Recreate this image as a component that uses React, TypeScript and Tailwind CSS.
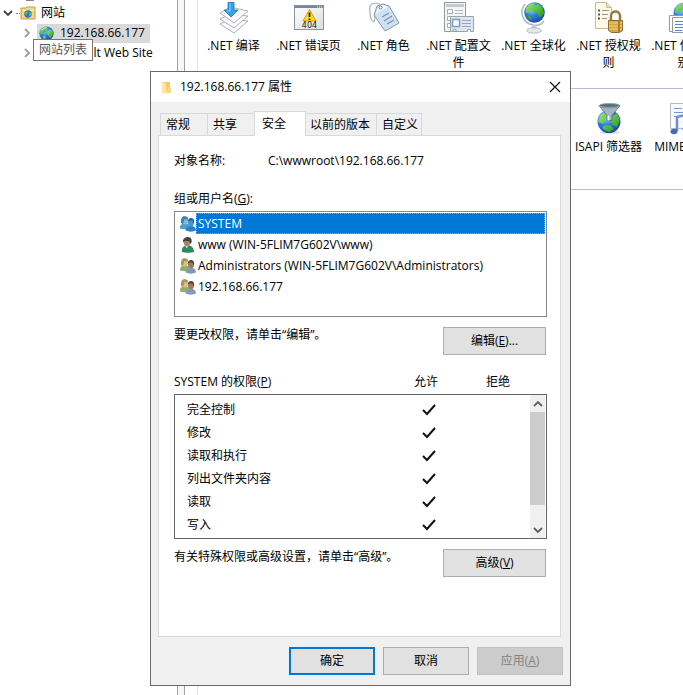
import type { ReactNode } from "react";
import clsx from "clsx";

const users = [
  { name: "SYSTEM", icon: "system" },
  { name: "www (WIN-5FLIM7G602V\\www)", icon: "single" },
  { name: "Administrators (WIN-5FLIM7G602V\\Administrators)", icon: "group" },
  { name: "192.168.66.177", icon: "group" },
];

const permissions = ["完全控制", "修改", "读取和执行", "列出文件夹内容", "读取", "写入"];

const tabs = [
  { label: "常规", size: "w-12 pl-[5px]" },
  { label: "共享", size: "w-12 pl-[5px]" },
  { label: "安全", size: "w-[52px] pl-[7px]", active: true },
  { label: "以前的版本", size: "w-[72px] pl-1" },
  { label: "自定义", size: "w-[46px] pl-[5px]" },
];

function Globe({ className }: { className?: string }) {
  return (
    <svg viewBox="0 0 16 16" className={className} aria-hidden="true">
      <defs>
        <radialGradient id="sea" cx="0.35" cy="0.3" r="0.8">
          <stop offset="0" stopColor="#a4dcff" />
          <stop offset="0.45" stopColor="#2f7fe6" />
          <stop offset="1" stopColor="#173c9c" />
        </radialGradient>
        <linearGradient id="land" x1="0" y1="0" x2="1" y2="1">
          <stop offset="0" stopColor="#a6e08c" />
          <stop offset="0.5" stopColor="#5cc43c" />
          <stop offset="1" stopColor="#2a8a24" />
        </linearGradient>
      </defs>
      <circle cx="8" cy="8" r="7.600" fill="url(#sea)" />
      <path d="M2 4.600 5 1.600 8.600 1l1 1.600-2.400 1.600.6 1.600-2.600 1.400-.8 2.200-2.600-1.200L1 8z" fill="url(#land)" />
      <path d="m9.400 5.200 2.800-1.800 2.200 1.400.8 3-1.400 3-2.200 2.400-1.400-2.800L8.400 8z" fill="url(#land)" />
      <path d="m4.600 10.400 2.600.6.8 1.800-1.600 1.800-2-1.400z" fill="url(#land)" />
      <path d="M3 4.400a6 6 0 0 1 5-2.600" stroke="#e4f6ff" strokeWidth="0.900" fill="none" />
    </svg>
  );
}

function CompileIcon() {
  return (
    <svg viewBox="0 0 32 32" className="h-8 w-8" aria-hidden="true">
      <g fill="#fafafa" stroke="#a4a9ab" strokeWidth="0.900" strokeLinejoin="round">
        <path d="m2 22 10-5 18 2-14 12z" />
        <path d="m2 17 10-5 18 2-14 12z" />
        <path d="m2 11 10-6 18 4-14 12z" />
      </g>
      <path d="M10 .5h6V8h4l-7 7-7-7h4z" fill="#35a2e8" stroke="#1473b8" strokeWidth="0.800" />
      <path d="M12 1.500V9h-3" stroke="#8ed2fa" fill="none" />
    </svg>
  );
}

function ErrorPageIcon() {
  return (
    <svg viewBox="0 0 32 32" className="h-8 w-8" aria-hidden="true">
      <defs>
        <linearGradient id="page" x1="0" y1="0" x2="1" y2="1">
          <stop offset="0" stopColor="#ffffff" />
          <stop offset="1" stopColor="#dcdcdc" />
        </linearGradient>
      </defs>
      <rect x="1.500" y="3.500" width="29" height="24" fill="url(#page)" stroke="#8c949b" />
      <path d="M2 4h28v2H2z" fill="#6f86a5" />
      <path d="M24 5h1m1 0h1m1 0h1" stroke="#fff" />
      <path d="M16.500 7.500 23 19H10z" fill="#ffd92e" stroke="#d9a300" strokeLinejoin="round" />
      <path d="M16.500 10.500V15m0 1.500V18" stroke="#222" strokeWidth="1.800" />
      <text x="16.500" y="26" textAnchor="middle" fontSize="8" fill="#222" fontFamily="DejaVu Sans">
        404
      </text>
    </svg>
  );
}

function RolesIcon() {
  return (
    <svg viewBox="0 0 32 32" className="h-8 w-8" aria-hidden="true">
      <path d="M12 2C5 0 0 2 2 10c0 5 1 9 4 10 2-5 0-10 4-16" fill="none" stroke="#a9b0b5" strokeWidth="1.200" />
      <path d="m9 4 6-2 6 2 10 17-14 8L6 13z" fill="#cfe1ed" stroke="#7b9caf" strokeLinejoin="round" />
      <path d="m10 5 5-2 5 2L8 12z" fill="#edf5f9" />
      <circle cx="12.500" cy="5.500" r="1.500" fill="#fff" stroke="#747f86" />
      <path d="m14 15 7-4m-5 8 8-5m-5 8 7-4" stroke="#6d92c2" strokeWidth="1.200" />
    </svg>
  );
}

function ProfileIcon() {
  return (
    <svg viewBox="0 0 32 32" className="h-8 w-8" aria-hidden="true">
      <path d="M1.500.500h21v29h-21z" fill="#f4f5f6" stroke="#90979d" />
      <path d="M3 2h18v3H3z" fill="#c4cbd0" />
      <path d="M4.500 7.500h5v4h-5zm0 7h3v4h-3zm0 7h3v4h-3z" fill="#fff" stroke="#a3adb4" />
      <path d="M4 12.500h1M12 8.500h8m-8 3h8" stroke="#b1bac2" />
      <path d="M7.500 14.500h23v15h-3v-2h-3v2H13v-2h-3v2H7.500z" fill="#dfe5ea" stroke="#98a4ae" />
      <rect x="9.500" y="17.500" width="7" height="7" fill="#fff" stroke="#7d9fc9" strokeWidth="1.600" />
      <path d="M19 18.500h9m-9 3h9m-9 3h9" stroke="#8ea9cb" strokeWidth="1.200" />
    </svg>
  );
}

function GlobalizationIcon() {
  return (
    <svg viewBox="0 0 32 32" className="h-8 w-8" aria-hidden="true">
      <path d="M7 2c-6 7-3 19 8 21 5 1 9-1 11-4" fill="none" stroke="#b7bcc0" strokeWidth="1.600" />
      <path d="m14 23-1 4h6l-1-4" fill="#c9cdd0" />
      <ellipse cx="16" cy="28.500" rx="7.500" ry="2.700" fill="#e4e6e8" stroke="#a8adb1" strokeWidth="0.700" />
      <circle cx="16.500" cy="10.500" r="10.300" fill="url(#sea)" />
      <path d="m8 6 4-4 5-1-1 4-3 2-1 3-4 1zm7-1 5-3 4 3 2 6-4 5-3-5-4-1-3-3z" fill="url(#land)" />
      <path d="m9 13 4 1 1 4-3-1z" fill="#44a23f" />
    </svg>
  );
}

function AuthorizationIcon() {
  return (
    <svg viewBox="0 0 32 32" className="h-8 w-8" aria-hidden="true">
      <path d="M2.500.500h11l5 5v21h-16z" fill="#fff9e5" stroke="#c9bd98" />
      <path d="M13.500.500v5h5" fill="#e9dfbd" stroke="#c9bd98" />
      <path d="M5 8.500h2m-2 4h2m-2 4h2" stroke="#555" strokeWidth="2" />
      <path d="M9 8.500h7m-7 4h6m-6 4h5" stroke="#9a9687" />
      <path d="M18 19v-5c0-6 9-6 9 0v5" fill="none" stroke="#937b4c" strokeWidth="2.500" />
      <path d="M15.500 18.500h14v10l-3 2h-8l-3-2z" fill="#d3a743" stroke="#91702b" />
      <path d="M16 21h13m-13 3h13m-13 3h13" stroke="#efd283" />
      <path d="M26 19v11" stroke="#a77d2e" strokeWidth="2" />
    </svg>
  );
}

function TrustIcon() {
  return (
    <svg viewBox="0 0 32 32" className="h-8 w-8" aria-hidden="true">
      <circle cx="16" cy="11" r="10.500" fill="url(#sea)" />
      <path d="m8 5 5-4 5 1-3 5-3 3-5 1zm8 1 5-3 4 7-4 4z" fill="url(#land)" />
      <path d="M1.500 13.500h14v16h-14z" fill="#fff" stroke="#909aa2" />
      <path d="M4.500 15.500h14v15h-14z" fill="#fff" stroke="#909aa2" />
      <path d="M7 19.500h9m-9 3h9m-9 3h9m-9 3h7" stroke="#5b88c1" />
    </svg>
  );
}

function IsapiIcon() {
  return (
    <svg viewBox="0 0 32 32" className="h-8 w-8" aria-hidden="true">
      <ellipse cx="17" cy="29.500" rx="10" ry="1.500" fill="#d9d9d9" />
      <circle cx="16" cy="18.500" r="11.500" fill="url(#sea)" />
      <path d="m7 12 6-3 2 5-3 3-2 4-5-2zm12 2 5-4 3 7-3 7-4-2-3-4zm-9 9 7-1 4 4-5 3-6-3z" fill="url(#land)" />
      <path d="M6 2.500c4 3 17 3 21 0l-8 10v5h-5v-5z" fill="#a5b4c0" stroke="#526778" strokeWidth="0.800" />
      <ellipse cx="16.500" cy="2.500" rx="10" ry="2" fill="#5a6f80" stroke="#91a1ae" />
      <path d="M15.500 12.500v5" stroke="#e9f1f6" strokeWidth="2" />
    </svg>
  );
}

function MimeIcon() {
  return (
    <svg viewBox="0 0 32 32" className="h-8 w-8" aria-hidden="true">
      <path d="M2.500.500h14l5 5v20h-19z" fill="#fafafa" stroke="#b7bbbe" />
      <path d="M6 5.500h8m-8 4h11m-11 4h4" stroke="#6e97ce" />
      <path d="M9 28V14l12-3v14" stroke="#6a8fd2" strokeWidth="2.500" fill="none" />
      <ellipse cx="6" cy="28.500" rx="3.500" ry="2.700" fill="#416cbb" />
      <ellipse cx="18" cy="26" rx="3.500" ry="2.700" fill="#416cbb" />
    </svg>
  );
}

function UserIcon({ kind }: { kind: string }) {
  if (kind === "single") {
    return (
      <svg viewBox="0 0 16 16" className="h-4 w-4" aria-hidden="true">
        <path d="M2 15c-.5-4 1-6 4-6.500h3c3 .5 5 3 5 6.500-3 1-9 1-12 0z" fill="#2f8a57" />
        <path d="m5 8.500 2 3 1-3z" fill="#eef3ed" />
        <ellipse cx="7" cy="5" rx="3.200" ry="4.200" fill="#a98068" />
        <path d="M3 5.500C2 0 10-2 11.500 2.500c.5 3-.5 4-1 4.500L9 4 4.500 4z" fill="#46413e" />
      </svg>
    );
  }
  const system = kind === "system";
  return (
    <svg viewBox="0 0 16 16" className="h-4 w-4" aria-hidden="true">
      <path d="M0 12.500C0 9 1 7.500 5 7.500s5 2 5 5c-3 1-7 1-10 0z" fill={system ? "#4f9fcd" : "#8fae6c"} />
      <ellipse cx="5" cy="4.500" rx="3" ry="4" fill={system ? "#7bb9da" : "#dcc08d"} />
      <path d="M1 7C.5 1 3-.5 6 .5c2 .5 2.500 2 2 3L4.500 3 3 8z" fill={system ? "#3a84b4" : "#a89858"} />
      <path d="M5.500 14.500c0-3 2-4.500 5.500-4.500s5 2 5 4.500c-3 1.500-7 1.500-10.500 0z" fill={system ? "#2f82c2" : "#8199bd"} />
      <ellipse cx="11" cy="6.500" rx="3" ry="3.800" fill={system ? "#4694c8" : "#a77754"} />
      <path d="M7.800 6C7.500 1 14 .5 14.200 5.500l-.7 2-1-3-3.500 0z" fill={system ? "#225f90" : "#4b443e"} />
    </svg>
  );
}

function Chevron({ className }: { className?: string }) {
  return (
    <svg viewBox="0 0 10 10" className={clsx("h-[10px] w-[10px] shrink-0", className)} aria-hidden="true">
      <path d="m1 3 4 4 4-4" fill="none" stroke="currentColor" strokeWidth="1.800" />
    </svg>
  );
}

function Feature({ icon, children, className }: { icon: ReactNode; children: ReactNode; className?: string }) {
  return (
    <a href="#" className={clsx("flex flex-col items-center text-center", className)}>
      {icon}
      <span className="mt-[3px] leading-[17px] whitespace-nowrap">{children}</span>
    </a>
  );
}

function PushButton({ children }: { children: ReactNode }) {
  return (
    <button type="button" className="h-7 w-[103px] shrink-0 border border-[#adadad] bg-[#e1e1e1] leading-4">
      {children}
    </button>
  );
}

function SiteTree() {
  return (
    <nav className="w-[177px] shrink-0 overflow-hidden" aria-label="连接">
      <div className="ml-[22px] h-[3px]">
        <div className="ml-1 h-px w-2 bg-[#8b8178]" />
      </div>
      <ul>
        <li>
          <div className="flex h-5 items-center pl-[3px]">
            <Chevron className="text-[#404040]" />
            <span className="ml-[3px] w-1 border-t border-dotted border-[#808080]" />
            <svg viewBox="0 0 16 14" className="h-[14px] w-4" aria-hidden="true">
              <path d="M1 2h5l1-1h8v12H1z" fill="#f5d681" stroke="#c89c46" />
              <path d="M2 4.500h12" stroke="#fff1bb" />
              <circle cx="8" cy="8" r="3.700" fill="#2374bd" />
              <path d="m5 7 2-2 1 1-1 2-1 2zm4-1 2 1v2l-2 2z" fill="#65bb6c" />
            </svg>
            <span className="ml-[5px]">网站</span>
          </div>
          <ul>
            <li className="flex h-5 items-center pl-[22px]">
              <Chevron className="-rotate-90 text-[#a0a0a0]" />
              <span className="ml-[5px] flex h-[19px] items-center bg-[#d9d9d9] pr-[5px] pl-[2px]">
                <Globe className="mr-[6px] h-[15px] w-[15px]" />
                192.168.66.177
              </span>
            </li>
            <li className="flex h-5 items-center pl-[22px]">
              <Chevron className="-rotate-90 text-[#a0a0a0]" />
              <Globe className="mr-[6px] ml-[7px] h-[15px] w-[15px]" />
              Default Web Site
            </li>
          </ul>
        </li>
      </ul>
      <div
        role="tooltip"
        className="absolute top-[39px] left-[33px] flex h-[22px] items-center border border-[#767676] bg-white px-[5px] text-[#575757]"
      >
        网站列表
      </div>
    </nav>
  );
}

function FeatureView() {
  return (
    <main className="ml-3 min-w-0 flex-1 overflow-hidden border-l border-[#e3e3e3]">
      <section className="-ml-[2px] grid h-[88px] grid-cols-[repeat(7,75px)] pt-[2px]">
        <Feature icon={<CompileIcon />}>.NET 编译</Feature>
        <Feature icon={<ErrorPageIcon />}>.NET 错误页</Feature>
        <Feature icon={<RolesIcon />}>.NET 角色</Feature>
        <Feature icon={<ProfileIcon />}>
          .NET 配置文
          <br />件
        </Feature>
        <Feature icon={<GlobalizationIcon />}>.NET 全球化</Feature>
        <Feature icon={<AuthorizationIcon />}>
          .NET 授权规
          <br />则
        </Feature>
        <Feature icon={<TrustIcon />}>
          .NET 信任级
          <br />别
        </Feature>
      </section>
      <section className="-ml-[2px] grid h-[102px] grid-cols-[repeat(7,75px)] border-y border-[#b3bee0] pt-[14px]">
        <Feature icon={<IsapiIcon />} className="col-start-6">
          ISAPI 筛选器
        </Feature>
        <Feature icon={<MimeIcon />}>MIME 类型</Feature>
      </section>
    </main>
  );
}

function PermissionTable() {
  return (
    <div className="relative mt-[19px]">
      <table className="block">
        <thead className="block">
          <tr className="grid grid-cols-[1fr_72px_72px] pr-[13px] leading-4">
            <th className="text-left font-normal">
              SYSTEM 的权限(<u>P</u>)
            </th>
            <th className="font-normal">允许</th>
            <th className="font-normal">拒绝</th>
          </tr>
        </thead>
        <tbody className="mt-1 block border border-[#646464] pt-[3px] pb-[2px]">
          {permissions.map((name) => (
            <tr key={name} className="grid h-[23px] grid-cols-[1fr_72px_72px] items-center pr-[9px]">
              <th scope="row" className="pl-3 text-left font-normal">
                {name}
              </th>
              <td className="flex justify-center">
                <svg viewBox="0 0 14 12" className="h-3 w-[14px]" role="img" aria-label="允许">
                  <path d="m1 6 4 4 8-9" fill="none" stroke="#111" strokeWidth="2" />
                </svg>
              </td>
              <td />
            </tr>
          ))}
        </tbody>
      </table>
      <div className="absolute right-[2px] bottom-px flex h-[143px] w-[15px] flex-col items-center bg-[#f0f0f0] text-[#606060]">
        <Chevron className="mt-1 mb-[3px] rotate-180" />
        <div className="h-[93px] w-full bg-[#cdcdcd]" />
        <Chevron className="mt-auto mb-[3px]" />
      </div>
    </div>
  );
}

function PropertiesDialog() {
  return (
    <div
      role="dialog"
      aria-labelledby="dialog-title"
      className="absolute top-[71px] left-[150px] w-[421px] border border-[#696969] bg-[#f0f0f0]"
    >
      <header className="flex h-[30px] items-center bg-white pr-[9px] pl-[10px]">
        <svg viewBox="0 0 11 13" className="h-[13px] w-[11px]" aria-hidden="true">
          <path d="M1 1h8v11H1z" fill="#f3cc69" />
          <path d="m1 1 4 1v11l-4-1z" fill="#ffe6a0" />
          <path d="M7 7h3v5H5V9h2z" fill="#f9d985" />
        </svg>
        <h1 id="dialog-title" className="ml-2">
          192.168.66.177 属性
        </h1>
        <button type="button" aria-label="关闭" className="ml-auto">
          <svg viewBox="0 0 12 12" className="h-3 w-3" aria-hidden="true">
            <path d="m1 1 10 10M11 1 1 11" stroke="#111" strokeWidth="1.200" />
          </svg>
        </button>
      </header>

      <div role="tablist" className="mt-[9px] flex items-end pl-[9px]">
        {tabs.map((tab) => (
          <button
            key={tab.label}
            type="button"
            role="tab"
            aria-selected={!!tab.active}
            className={clsx(
              "-mr-px border border-b-0 border-[#d9d9d9] text-left whitespace-nowrap",
              tab.size,
              tab.active ? "relative z-10 -mb-px h-[25px] bg-white" : "h-[22px]"
            )}
          >
            {tab.label}
          </button>
        ))}
      </div>

      <div role="tabpanel" className="mr-[9px] ml-[7px] border border-[#d9d9d9] bg-white pt-[17px] pr-[13px] pb-[59px] pl-[15px]">
        <dl className="flex leading-4">
          <dt className="w-[94px]">对象名称:</dt>
          <dd>C:\wwwroot\192.168.66.177</dd>
        </dl>

        <p id="users-label" className="mt-[22px] leading-4">
          组或用户名(<u>G</u>):
        </p>
        <ul role="listbox" aria-labelledby="users-label" className="mt-1 h-[106px] border border-[#828790] p-px">
          {users.map((user, i) => (
            <li key={user.name} role="option" aria-selected={i === 0} className="flex h-[21px] items-center pl-1">
              <UserIcon kind={user.icon} />
              <span
                className={clsx(
                  "flex h-full flex-1 items-center border border-dotted pl-px",
                  i === 0 ? "border-[#ff8728] bg-[#0078d7] text-white" : "border-transparent"
                )}
              >
                {user.name}
              </span>
            </li>
          ))}
        </ul>

        <div className="mt-[10px] flex items-start justify-between pr-px leading-4">
          <p>要更改权限，请单击“编辑”。</p>
          <PushButton>
            编辑(<u>E</u>)...
          </PushButton>
        </div>

        <PermissionTable />

        <div className="mt-[10px] flex items-start justify-between pr-px leading-4">
          <p>有关特殊权限或高级设置，请单击“高级”。</p>
          <PushButton>
            高级(<u>V</u>)
          </PushButton>
        </div>
      </div>

      <footer className="flex justify-end gap-2 py-[10px] pr-[7px]">
        <button type="button" className="h-7 w-[86px] border-2 border-[#0078d7] bg-[#e1e1e1]">
          确定
        </button>
        <button type="button" className="h-7 w-[86px] border border-[#adadad] bg-[#e1e1e1]">
          取消
        </button>
        <button type="button" disabled className="h-7 w-[86px] border border-[#bfbfbf] bg-[#cccccc] text-[#838383]">
          应用(<u>A</u>)
        </button>
      </footer>
    </div>
  );
}

export default function App() {
  return (
    <div
      lang="zh-CN"
      className="relative flex h-screen overflow-hidden bg-white font-['Open_Sans','Noto_Sans_CJK_SC',sans-serif] text-xs text-black"
    >
      <SiteTree />
      <div className="w-2 shrink-0 border-x border-[#a0a0a0] bg-[#f7f7f7]" />
      <FeatureView />
      <PropertiesDialog />
    </div>
  );
}
